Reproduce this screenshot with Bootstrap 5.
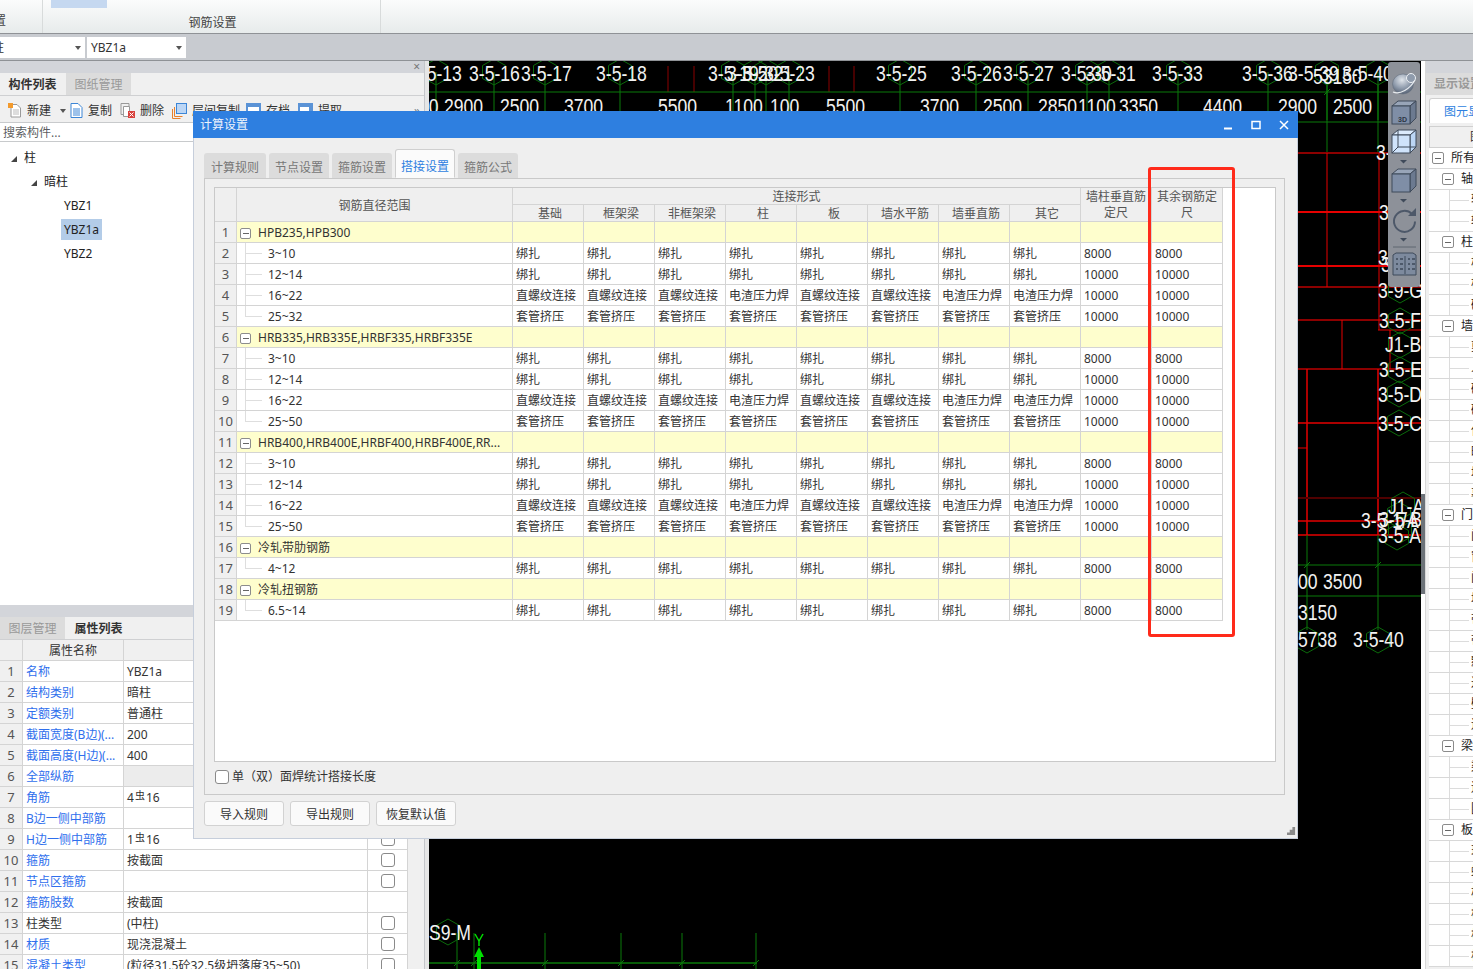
<!DOCTYPE html>
<html lang="zh">
<head>
<meta charset="utf-8">
<title>计算设置</title>
<link href="https://cdn.jsdelivr.net/npm/bootstrap@5.3.0/dist/css/bootstrap.min.css" rel="stylesheet">
<style>
html,body{height:969px;overflow:hidden}
body{font-family:"Noto Sans","Noto Sans CJK SC",sans-serif;font-size:12px;line-height:20px;color:#333;background:#fff;position:relative}
.ribbon-bar{height:34px;background:linear-gradient(#fbfcfc,#e7ebeb);border-bottom:1px solid #8f9296}
.ribbon-sec{height:33px;border-right:1px solid #d8dbdb;position:relative;text-align:center;padding-top:13px;color:#444}
.ribbon-a{text-align:left;margin-left:-6px;width:49px;padding-top:11px}
.ribbon-b{width:338px;padding-left:2px}
.ribbon-hi{width:56px;height:8px;background:#c5d8f0;margin:0 0 -8px 6px;position:relative;top:-13px}
.combo-bar{height:27px;background:#c8cbd0;border-bottom:1px solid #8f9296;padding-top:3px;gap:2px}
.combo-box{height:21px;background:#fff;border:0;line-height:21px;padding:0 4px;color:#333}
.combo-a{width:85px}.combo-b{width:99px}
.combo-clip{margin-left:-12px}
.caret-d{width:0;height:0;border:3.5px solid transparent;border-top:4px solid #555;border-bottom:0}
.work-area{height:908px}
.left-pane{width:425px;height:908px;background:#f0f0f0;border-right:1px solid #c4c6ca;overflow:hidden}
.left-pane>*{flex-shrink:0}
.pane-strip{height:12px;background:#d3d5da;color:#777;font-size:12px;line-height:11px;text-align:right;padding-right:4px}
.pane-tabs{height:23px;border-bottom:1px solid #cfd0d2;flex-wrap:nowrap}
.pane-tabs .nav-link{border:0;border-radius:0;height:22px;width:65px;padding:2px 0 0;text-align:center;font-size:12px;background:#dcdcdc;color:#999;margin:0 1px 0 0}
.pane-tabs .nav-link.active{background:#f0f0f0;color:#333;font-weight:700}
.tool-row{height:27px;gap:0;border-bottom:1px solid #c8cacc;padding-top:3px;position:relative}
.tool-item{gap:5px;margin-right:8px;color:#333}
.tool-new{margin-right:4px}.tool-del{margin-right:8px}.tool-lay{margin-right:6px}
.search-field{height:19px;border:0;border-radius:0;font-size:12px;padding:1px 3px 0;line-height:17px;background:#fff;color:#888;border-bottom:1px solid #c8cacc}
.tree-pane{height:458px;background:#fff;padding-top:4px}
.tree-line{height:24px;line-height:24px;color:#222}
.tree-l1{padding-left:11px}.tree-l2{padding-left:31px}.tree-l3{padding-left:64px}
.tri-mark{display:inline-block;width:0;height:0;border-style:solid;border-width:0 0 6px 6px;border-color:transparent transparent #444 transparent;margin-right:7px}
.tree-sel{display:inline-block;background:#b3cce8;height:21px;line-height:21px;padding:0 3px;margin-left:-3px}
.pane-gap{height:5px;background:#fff}
.pane-split{height:12px;background:#d3d5da}
.table.prop-grid{table-layout:fixed;width:408px;margin:0;border-collapse:separate;border-spacing:0;background:#fff}
.table.prop-grid>:not(caption)>*>*{padding:2px 3px 0;height:21px;line-height:18px;font-size:12px;border-width:0 1px 1px 0;border-style:solid;border-color:#d4d4d4;background-color:#fff;color:#333;white-space:nowrap;overflow:hidden;box-shadow:none}
.table.prop-grid>:not(caption)>*>.col-n{padding:1px 0 0;text-align:center;background-color:#f0f0f0;color:#555;font-size:13px}
.table.prop-grid>thead>*>*{background-color:#f0f0f0;text-align:center;font-weight:400}
.table.prop-grid>:not(caption)>*>.lbl{color:#2f6fed}
.table.prop-grid>:not(caption)>*>.lbl-k{color:#333}
.table.prop-grid>:not(caption)>*>.val-g{background-color:#ececec}
.table.prop-grid>:not(caption)>*>.chk-c{padding:3px 0 0 13px;line-height:0;vertical-align:top}
.w-n{width:23px}.w-l{width:101px}.w-v{width:244px}.w-c{width:40px}
.sq-check{width:14px;height:14px;margin:0;border:1px solid #8a8a8a;border-radius:3px;float:none;display:block;background-color:#fff}
.steel-sym{font-size:10px;position:relative;top:-3px;margin:0 1px}
.cad-gap{width:4px;background:#e6e6e6}
.cad-view{width:992px;height:908px;background:#000;overflow:hidden}
.cad-view svg{display:block}
.cad-txt{font-family:"Liberation Sans",sans-serif;font-size:22px;fill:#f2f2f2}
.scroll-col{width:4px;background:#fff;position:relative}
.scroll-thumb{height:100px;margin-top:433px;background:#6c7278}
.right-pane{width:48px;height:908px;background:#f0f0f0;overflow:hidden;border-left:1px solid #d8d8d8}
.right-inner{width:240px}
.rp-title{width:65px;height:22px;background:#dcdcdc;color:#999;padding:1px 0 0 8px;font-weight:700}
.rp-tab{width:80px;height:25px;margin:3px 0 0 3px;background:#fff;color:#2e7fe0;padding:3px 0 0 14px;border:1px solid #d0d0d0;border-bottom:0;border-radius:3px 3px 0 0}
.rp-head{height:22px;margin-left:3px;margin-top:3px;background:#f0f0f0;border:1px solid #d0d0d0;padding-left:40px;color:#333}
.rp-body{margin-left:3px;background:#fff}
.rp-row{height:21px;line-height:20px;border-bottom:1px solid #d8d8d8;white-space:nowrap;color:#222}
.rp-r0{padding-left:3px}.rp-r1{padding-left:13px}
.rp-leaf{padding-left:42px;background:linear-gradient(#dcdcdc,#dcdcdc) 20px 50%/20px 1px no-repeat,linear-gradient(#dcdcdc,#dcdcdc) 20px 0/1px 100% no-repeat}
.minus-box{display:inline-block;width:12px;height:12px;border:1px solid #8c8c8c;border-radius:2px;background:linear-gradient(#666,#666) center/6px 1px no-repeat #fff;vertical-align:-2px;margin-right:7px}
.calc-dialog{position:absolute;left:193px;top:111px;width:1105px;height:728px;background:#efefef;border:1px solid #c6cedb;border-top:0}
.dlg-title{height:27px;background:#2e7fe0;color:#eef4fc;padding-left:7px;margin:0 -1px;line-height:27px}
.win-btns{gap:0}
.win-btn{width:28px;height:27px}
.dlg-tabs{height:40px;padding:15px 0 0 10px;border:0;gap:3px;flex-wrap:nowrap}
.dlg-tabs .nav-link{width:60px;height:25px;margin:0;padding:5px 0 0;border:0;border-radius:3px 3px 0 0;background:#dcdcdc;color:#777;font-size:12px;text-align:center;line-height:19px}
.dlg-tabs .first-tab{width:62px}
.dlg-tabs .nav-link.active{margin-top:-4px;padding-top:7px;height:29px;color:#2e7fe0;border:1px solid #cfcfcf;border-bottom:1px solid #fbfbfb;position:relative;z-index:1;background:#fbfbfb}
.dlg-pane{margin-left:10px;width:1081px;height:617px;border:1px solid #c9c9c9;padding:8px 9px 0;margin-top:0}
.grid-frame{width:1062px;height:575px;background:#fff;border:1px solid #c9c9c9}
.table.data-grid{table-layout:fixed;width:1008px;margin:0;border-collapse:separate;border-spacing:0}
.table.data-grid>:not(caption)>*>*{padding:2px 3px 0;height:21px;line-height:18px;font-size:12px;border-width:0 1px 1px 0;border-style:solid;border-color:#d4d4d4;background-color:#fff;color:#333;white-space:nowrap;overflow:hidden;box-shadow:none}
.table.data-grid>thead>*>*{background-color:#efefef;text-align:center;font-weight:400;height:17px;line-height:16px;padding:1px 0 0;color:#555;white-space:normal;vertical-align:middle}
.table.data-grid>thead>*>.sub-h{padding-left:4px;line-height:15px}
.table.data-grid>thead>*>.top-h{line-height:15px}
.table.data-grid>thead>*>.name-h{padding-top:3px}
.table.data-grid>:not(caption)>*>.col-n{background-color:#f0f0f0;text-align:center;color:#555;padding:1px 0 0;font-size:13px}
.table.data-grid>tbody>.grp>*{background-color:#fefecd}
.table.data-grid>tbody>.grp>.col-n{background-color:#f0f0f0}
.table.data-grid>tbody>*>.leaf{padding-left:31px;background:linear-gradient(#dedede,#dedede) 8px 50%/17px 1px no-repeat,linear-gradient(#dedede,#dedede) 8px 0/1px 100% no-repeat}
.table.data-grid>tbody>*>.leaf-end{background:linear-gradient(#dedede,#dedede) 8px 50%/17px 1px no-repeat,linear-gradient(#dedede,#dedede) 8px 0/1px 50% no-repeat}
.c-n{width:22px}.c-name{width:276px}.c-d{width:71px}
.grp-cell .minus-box{margin:0 7px 0 0;width:11px;height:11px}
.chk-row{height:28px;padding:1px 0 0 1px;gap:3px;color:#333}
.dlg-btns{padding:6px 0 0 10px;gap:6px}
.btn.dlg-btn{width:80px;height:25px;padding:0;font-size:12px;background:#fafafa;border:1px solid #d2d2d2;border-radius:3px;color:#333;line-height:25px}
.grip-mark{position:absolute;right:1px;bottom:2px;width:9px;height:9px}
.mark-box{position:absolute;left:1148px;top:167px;width:87px;height:470px;border:3px solid #ff2a1a;border-radius:3px;pointer-events:none}
</style>
</head>
<body>
<div class="ribbon-bar d-flex">
  <div class="ribbon-sec ribbon-a">置</div>
  <div class="ribbon-sec ribbon-b"><div class="ribbon-hi"></div>钢筋设置</div>
</div>
<div class="combo-bar d-flex">
  <div class="combo-box combo-a d-flex align-items-center justify-content-between"><span class="combo-clip">柱</span><span class="caret-d"></span></div>
  <div class="combo-box combo-b d-flex align-items-center justify-content-between"><span>YBZ1a</span><span class="caret-d"></span></div>
</div>
<div class="work-area d-flex">
  <div class="left-pane d-flex flex-column flex-shrink-0">
    <div class="pane-strip">×</div>
    <ul class="nav nav-tabs pane-tabs">
      <li class="nav-item"><a class="nav-link active" href="#">构件列表</a></li>
      <li class="nav-item"><a class="nav-link" href="#">图纸管理</a></li>
    </ul>
    <div class="tool-row d-flex align-items-center ps-2">
      <span class="tool-item tool-new d-flex align-items-center"><svg width="14" height="15" viewBox="0 0 14 15"><path d="M3 1.5h6l3.5 3.5v9H3z" fill="#fff" stroke="#9a9a9a"/><path d="M5 7h6M5 9h6M5 11h6" stroke="#bbb"/><rect x="0" y="0" width="5" height="5" fill="#f39a2c"/></svg><span>新建</span><span class="caret-d ms-1"></span></span>
      <span class="tool-item d-flex align-items-center"><svg width="13" height="15" viewBox="0 0 13 15"><path d="M1 .5h7l4 4v10H1z" fill="#fff" stroke="#3d86d6"/><path d="M3 6h7M3 8h7M3 10h7M3 12h7" stroke="#3d86d6"/></svg><span>复制</span></span>
      <span class="tool-item tool-del d-flex align-items-center"><svg width="15" height="15" viewBox="0 0 15 15"><path d="M1 .5h8v3" fill="none" stroke="#999"/><path d="M1 .5v11h3" fill="none" stroke="#999"/><path d="M3.500 3.500h6v10h-6z" fill="#fff" stroke="#999"/><rect x="8" y="8" width="7" height="7" fill="#d8423d"/><path d="M9.500 9.500l4 4M13.500 9.500l-4 4" stroke="#fff"/></svg><span>删除</span></span>
      <span class="tool-item tool-lay d-flex align-items-center"><svg width="15" height="16" viewBox="0 0 15 16"><path d="M.5 6v9.500h8" fill="none" stroke="#e8802c"/><path d="M2.500 4v9.500h8" fill="none" stroke="#e8802c"/><rect x="4.500" y=".5" width="10" height="10" fill="#bcd6f5" stroke="#3d86d6"/></svg><span>层间复制</span></span>
      <span class="tool-item d-flex align-items-center"><svg width="15" height="15" viewBox="0 0 15 15"><rect width="15" height="15" fill="#5b93d6"/><rect x="2" y="4" width="11" height="10" fill="#fff"/></svg><span>存档</span></span>
      <span class="tool-item d-flex align-items-center"><svg width="15" height="15" viewBox="0 0 15 15"><rect width="15" height="15" fill="#5b93d6"/><rect x="2" y="4" width="9" height="10" fill="#fff"/></svg><span>提取</span></span>
      <span class="ms-auto me-1 text-secondary">»</span>
    </div>
    <input class="form-control search-field" placeholder="搜索构件...">
    <div class="tree-pane">
      <div class="tree-line tree-l1"><span class="tri-mark"></span>柱</div>
      <div class="tree-line tree-l2"><span class="tri-mark"></span>暗柱</div>
      <div class="tree-line tree-l3">YBZ1</div>
      <div class="tree-line tree-l3"><span class="tree-sel">YBZ1a</span></div>
      <div class="tree-line tree-l3">YBZ2</div>
    </div>
    <div class="pane-gap"></div>
    <div class="pane-split"></div>
    <ul class="nav nav-tabs pane-tabs">
      <li class="nav-item"><a class="nav-link" href="#">图层管理</a></li>
      <li class="nav-item"><a class="nav-link active" href="#">属性列表</a></li>
    </ul>
    <table class="table prop-grid"><thead><tr><th class="w-n"></th><th class="w-l">属性名称</th><th class="w-v"></th><th class="w-c"></th></tr></thead><tbody id="propBody"></tbody></table>
  </div>
  <div class="cad-gap flex-shrink-0"></div>
  <div class="cad-view flex-shrink-0" id="cadView"></div>
  <div class="scroll-col flex-shrink-0"><div class="scroll-thumb"></div></div>
  <div class="right-pane flex-shrink-0">
    <div class="right-inner">
      <div class="pane-strip"></div>
      <div class="rp-title">显示设置</div>
      <div class="rp-tab">图元显示</div>
      <div class="rp-head">图层</div>
      <div class="rp-body" id="rpBody"></div>
    </div>
  </div>
</div>

<div class="calc-dialog d-flex flex-column">
  <div class="dlg-title d-flex justify-content-between">
    <span>计算设置</span>
    <div class="win-btns d-flex">
      <div class="win-btn d-flex align-items-center justify-content-center"><svg width="10" height="10" viewBox="0 0 10 10"><path d="M1 8.500h8" stroke="#fff" stroke-width="2"/></svg></div>
      <div class="win-btn d-flex align-items-center justify-content-center"><svg width="10" height="10" viewBox="0 0 10 10"><rect x="1" y="1.500" width="8" height="7" fill="none" stroke="#fff" stroke-width="1.500"/></svg></div>
      <div class="win-btn d-flex align-items-center justify-content-center"><svg width="10" height="10" viewBox="0 0 10 10"><path d="M1 1l8 8M9 1l-8 8" stroke="#fff" stroke-width="1.500"/></svg></div>
    </div>
  </div>
  <ul class="nav nav-tabs dlg-tabs">
    <li class="nav-item"><a class="nav-link first-tab" href="#">计算规则</a></li>
    <li class="nav-item"><a class="nav-link" href="#">节点设置</a></li>
    <li class="nav-item"><a class="nav-link" href="#">箍筋设置</a></li>
    <li class="nav-item"><a class="nav-link active" href="#">搭接设置</a></li>
    <li class="nav-item"><a class="nav-link" href="#">箍筋公式</a></li>
  </ul>
  <div class="dlg-pane">
    <div class="grid-frame">
      <table class="table data-grid">
        <thead>
          <tr><th class="c-n" rowspan="2"></th><th class="c-name name-h" rowspan="2">钢筋直径范围</th><th class="top-h" colspan="8">连接形式</th><th class="c-d" rowspan="2">墙柱垂直筋定尺</th><th class="c-d" rowspan="2">其余钢筋定尺</th></tr>
          <tr><th class="c-d sub-h">基础</th><th class="c-d sub-h">框架梁</th><th class="c-d sub-h">非框架梁</th><th class="c-d sub-h">柱</th><th class="c-d sub-h">板</th><th class="c-d sub-h">墙水平筋</th><th class="c-d sub-h">墙垂直筋</th><th class="c-d sub-h">其它</th></tr>
        </thead>
        <tbody id="gridBody"></tbody>
      </table>
    </div>
    <div class="chk-row d-flex align-items-center"><input class="form-check-input sq-check" type="checkbox"><span>单（双）面焊统计搭接长度</span></div>
  </div>
  <div class="dlg-btns d-flex">
    <button class="btn dlg-btn" type="button">导入规则</button>
    <button class="btn dlg-btn" type="button">导出规则</button>
    <button class="btn dlg-btn" type="button">恢复默认值</button>
  </div>
  <svg class="grip-mark" viewBox="0 0 9 9"><path d="M6 0h3v3H6zM3 3h3v3H3zM6 3h3v3H6zM0 6h3v3H0zM3 6h3v3H3zM6 6h3v3H6z" fill="#8a8a8a" transform="scale(.9)"/></svg>
</div>
<div class="mark-box"></div>

<script>
/* property list */
var sym='<span class="steel-sym">虫</span>';
var props=[['名称','YBZ1a',0,0],['结构类别','暗柱',0,0],['定额类别','普通柱',0,0],['截面宽度(B边)(...','200',0,0],['截面高度(H边)(...','400',0,0],['全部纵筋','',1,0],['角筋','4'+sym+'16',1,0],['B边一侧中部筋','',1,0],['H边一侧中部筋','1'+sym+'16',1,0],['箍筋','按截面',1,0],['节点区箍筋','',1,0],['箍筋肢数','按截面',0,0],['柱类型','(中柱)',1,1],['材质','现浇混凝土',1,0],['混凝土类型','(粒径31.5砼32.5级坍落度35~50)',1,0]];
var h='';
props.forEach(function(p,i){
  h+='<tr><td class="col-n">'+(i+1)+'</td><td class="'+(p[3]?'lbl-k':'lbl')+'">'+p[0]+'</td><td class="'+(i==5?'val-g':'')+'">'+p[1]+'</td><td class="chk-c">'+(p[2]?'<input class="form-check-input sq-check" type="checkbox">':'')+'</td></tr>';
});
document.getElementById('propBody').innerHTML=h;

/* rebar grid */
var groups=[
 ['HPB235,HPB300',['3~10','12~14','16~22','25~32']],
 ['HRB335,HRB335E,HRBF335,HRBF335E',['3~10','12~14','16~22','25~50']],
 ['HRB400,HRB400E,HRBF400,HRBF400E,RR...',['3~10','12~14','16~22','25~50']],
 ['冷轧带肋钢筋',['4~12']],
 ['冷轧扭钢筋',['6.5~14']]];
var Z='直螺纹连接',D='电渣压力焊',T='套管挤压',B='绑扎';
function conn(r){
  if(r=='16~22')return [Z,Z,Z,D,Z,Z,D,D,'10000','10000'];
  if(r=='25~32'||r=='25~50')return [T,T,T,T,T,T,T,T,'10000','10000'];
  var v=(r=='12~14')?'10000':'8000';
  return [B,B,B,B,B,B,B,B,v,v];
}
var n=1,g='';
groups.forEach(function(gr){
  g+='<tr class="grp"><td class="col-n">'+(n++)+'</td><td class="grp-cell"><span class="minus-box"></span>'+gr[0]+'</td>';
  for(var k=0;k<10;k++)g+='<td></td>';
  g+='</tr>';
  gr[1].forEach(function(r,i){
    g+='<tr><td class="col-n">'+(n++)+'</td><td class="leaf'+(i==gr[1].length-1?' leaf-end':'')+'">'+r+'</td>';
    conn(r).forEach(function(c){g+='<td>'+c+'</td>'});
    g+='</tr>';
  });
});
document.getElementById('gridBody').innerHTML=g;

/* right tree */
var rp=[[0,'所有构件'],[1,'轴线'],[2,'轴网'],[2,'辅助轴线'],[1,'柱'],[2,'柱'],[2,'构造柱'],[2,'砌体柱'],[1,'墙'],[2,'剪力墙'],[2,'人防门框墙'],[2,'砌体墙'],[2,'砌体加筋'],[2,'保温墙'],[2,'暗梁'],[2,'墙垛'],[2,'幕墙'],[1,'门窗洞'],[2,'门'],[2,'窗'],[2,'门联窗'],[2,'墙洞'],[2,'带形窗'],[2,'带形洞'],[2,'飘窗'],[2,'过梁'],[2,'壁龛'],[2,'连梁'],[1,'梁'],[2,'梁'],[2,'连梁'],[2,'圈梁'],[1,'板'],[2,'现浇板'],[2,'螺旋板'],[2,'柱帽'],[2,'板洞'],[2,'板受力筋'],[2,'板负筋']];
document.getElementById('rpBody').innerHTML=rp.map(function(r){
  if(r[0]==2)return '<div class="rp-row rp-leaf">'+r[1]+'</div>';
  return '<div class="rp-row '+(r[0]==0?'rp-r0':'rp-r1')+'"><span class="minus-box"></span>'+r[1]+'</div>';
}).join('');

/* CAD drawing, in page coordinates */
var GR='#0a7a0a',DG='#0b6b0b',RD='#e60000',DR='#8c0000';
function L(x1,y1,x2,y2,c,w){return '<line x1="'+x1+'" y1="'+y1+'" x2="'+x2+'" y2="'+y2+'" stroke="'+c+'" stroke-width="'+(w||1)+'"/>'}
function H(x,y){var r=13,s=11.5;return '<polygon points="'+x+','+(y-r)+' '+(x+s)+','+(y-r/2)+' '+(x+s)+','+(y+r/2)+' '+x+','+(y+r)+' '+(x-s)+','+(y+r/2)+' '+(x-s)+','+(y-r/2)+'" fill="none" stroke="'+DG+'"/>'}
function T_(x,y,t){return '<text class="cad-txt" transform="translate('+x+' '+y+') scale(.8 1)">'+t+'</text>'}
var s='';
[436,494,545,620,733,755,766,789,900,976,1028,1087,1109,1178,1268,1327,1378].forEach(function(x){s+=L(x,72,x,120,GR)+H(x,72)});
[668,694,829,854].forEach(function(x){s+=L(x,66,x,92,DR)});
s+=L(429,92,1421,92,GR);
s+=L(1298,122,1421,122,GR);
[[411,'3-5-13'],[469,'3-5-16'],[521,'3-5-17'],[596,'3-5-18'],[708,'3-5-19'],[727,'3-5-20'],[742,'3-5-21'],[764,'3-5-23'],[876,'3-5-25'],[951,'3-5-26'],[1003,'3-5-27'],[1061,'3-5-30'],[1085,'3-5-31'],[1152,'3-5-33'],[1242,'3-5-36'],[1288,'3-5-39'],[1342,'3-5-40']].forEach(function(a){s+=T_(a[0],80.5,a[1])});
s+=T_(1313,84,'53150');
[[419,'00'],[444,'2900'],[500,'2500'],[564,'3700'],[658,'5500'],[725,'1100'],[770,'100'],[826,'5500'],[920,'3700'],[983,'2500'],[1038,'2850'],[1078,'1100'],[1119,'3350'],[1203,'4400'],[1278,'2900'],[1333,'2500']].forEach(function(a){s+=T_(a[0],114,a[1])});
/* right of dialog */
s+=L(1327,85,1327,153,GR)+L(1378,85,1378,153,GR);
s+=L(1298,153,1421,153,DR,2)+L(1298,212,1421,212,RD,2)+L(1298,266,1421,266,RD,2)+L(1298,287,1421,287,DR,2)+L(1298,320,1421,320,DR,2)+L(1298,369,1421,369,DR,2);
s+=L(1327,153,1327,287,RD)+L(1379,153,1379,330,RD)+L(1378,330,1421,330,RD)+L(1342,320,1342,369,RD)+L(1390,330,1390,369,RD);
s+=L(1378,369,1378,535,RD,1.5)+L(1307,369,1307,535,RD,1.5)+L(1298,423,1421,423,RD,1.5)+L(1298,448,1307,448,RD)+L(1298,498,1421,498,'#500000',2)+L(1298,521,1421,521,RD,1.5)+L(1298,535,1421,535,RD,1.5);
s+=L(1307,535,1307,630,GR)+L(1378,535,1378,630,GR)+L(1298,565,1421,565,GR)+L(1298,596,1421,596,GR);
s+=L(1304,568,1310,562,GR)+L(1375,568,1381,562,GR)+L(1324,95,1330,89,GR);
[[1400,290],[1400,321],[1400,345],[1400,370],[1399,394],[1399,423],[1403,505],[1399,515],[1400,530],[1397,537],[1307,640],[1378,640]].forEach(function(a){s+=H(a[0],a[1])});
[[1376,160,'3-'],[1379,220,'3'],[1378,265,'3'],[1381,272,'3'],[1378,298,'3-9-G'],[1379,328,'3-5-F'],[1385,352,'J1-B'],[1379,377,'3-5-E'],[1378,402,'3-5-D'],[1378,431,'3-5-C'],[1388,514,'J1-A'],[1361,528,'3-5-1/A'],[1379,527,'3-5-B'],[1378,543,'3-5-A'],[1298,589,'00'],[1323,589,'3500'],[1298,620,'3150'],[1298,647,'5738'],[1353,647,'3-5-40']].forEach(function(a){s+=T_(a[0],a[1],a[2])});
/* lower left */
s+=H(448,932)+T_(429,940,'S9-M');
s+=L(429,963,757,963,GR,1.500);
[457,474,545,621,682,756].forEach(function(x){s+=L(x,933,x,969,GR)+L(x-3,966,x+3,960,GR)});
s+=L(475,934,479,941,'#00e000',1.500)+L(483,934,479,941,'#00e000',1.500)+L(479,941,479,946,'#00e000',1.500);
s+='<path d="M479 947l5 10h-3v12h-4v-12h-3z" fill="#00e000"/>';
/* floating view toolbar */
s+='<rect x="1388" y="62" width="32" height="225" rx="3" fill="#8d9199"/>';
s+='<defs><radialGradient id="gSph" cx=".45" cy=".3" r=".75"><stop offset="0" stop-color="#dfe4ea"/><stop offset=".55" stop-color="#8f9bac"/><stop offset="1" stop-color="#4f5b6d"/></radialGradient></defs>';
s+='<ellipse cx="1403" cy="84" rx="10.500" ry="10" fill="url(#gSph)" stroke="#5f6a7a" stroke-width=".5"/><circle cx="1411" cy="78" r="4.500" fill="#8f9bac" stroke="#eef1f5"/><path d="M1393 92c7 3 17-3 22-12" fill="none" stroke="#e8ecf0" stroke-width="1.200"/>';
function cube(y,front,top,side){
  var x=1392;
  return '<path d="M'+x+' '+(y+5)+'l6-5h18l-6 5z" fill="'+top+'" stroke="#3f4a5a"/>'+
         '<path d="M'+(x+18)+' '+(y+5)+'l6-5v17l-6 6z" fill="'+side+'" stroke="#3f4a5a"/>'+
         '<rect x="'+x+'" y="'+(y+5)+'" width="18" height="18" fill="'+front+'" stroke="#3f4a5a"/>';
}
s+=cube(101,'#7f8ea6','#98a5b8','#6c7a90')+'<text x="1398" y="122" font-family="Liberation Sans,sans-serif" font-size="7" fill="#2d3644" font-weight="700">3D</text>';
s+=cube(130,'#cfe3fb','#dcebfd','#bcd6f5')+L(1398,130,1398,147,'#3f4a5a')+L(1398,147,1416,147,'#3f4a5a')+L(1392,153,1398,147,'#3f4a5a');
s+='<path d="M1400 160h7l-3.500 3.500z" fill="#3f4a5a"/>';
s+=cube(169,'#7f8ea6','#98a5b8','#6c7a90');
s+='<path d="M1400 199h7l-3.500 3.500z" fill="#3f4a5a"/>';
s+='<path d="M1412 214a10.500 10.500 0 1 0 3 7.500" fill="none" stroke="#4d5869" stroke-width="2"/><path d="M1408 216l8 0 0-8z" fill="#4d5869"/>';
s+='<path d="M1400 238h7l-3.500 3.500z" fill="#3f4a5a"/>';
s+=L(1393,247,1416,247,'#5f6670');
s+='<path d="M1393 255l3-2h17l3 2v20h-23z" fill="#7d8a9e" stroke="#3f4a5a"/>';
[259,264,269].forEach(function(y){s+=L(1396,y,1398,y,'#1f2836')+L(1400,y,1403,y,'#1f2836')+L(1408,y,1410,y,'#1f2836')+L(1412,y,1415,y,'#1f2836')});
s+=L(1405,256,1405,274,'#3f4a5a');
document.getElementById('cadView').innerHTML='<svg width="992" height="908" viewBox="429 61 992 908" xmlns="http://www.w3.org/2000/svg">'+s+'</svg>';
</script>
<script src="https://cdn.jsdelivr.net/npm/bootstrap@5.3.0/dist/js/bootstrap.bundle.min.js"></script>
</body>
</html>
